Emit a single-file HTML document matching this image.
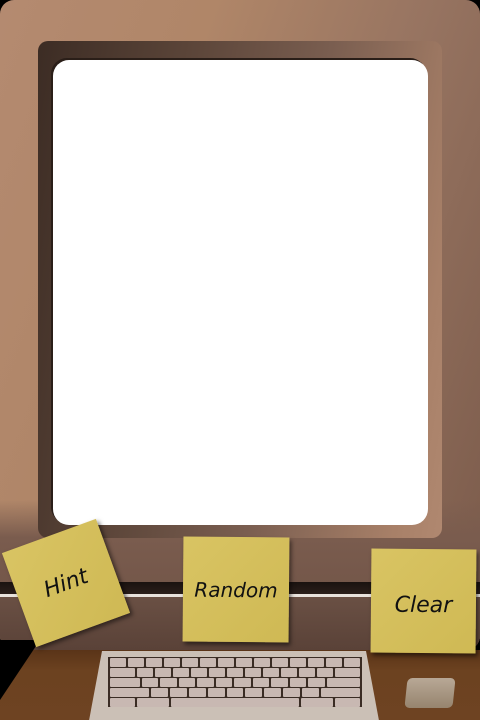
<!DOCTYPE html>
<html><head><meta charset="utf-8"><style>
html,body{margin:0;padding:0;background:#000;}
#r{position:relative;width:480px;height:720px;overflow:hidden;background:#000;}
.desk{position:absolute;left:0;top:650px;width:480px;height:70px;background:linear-gradient(#5a3418,#6c4220 30%,#6e4322);}
.deskshadow{position:absolute;left:0;top:640px;width:40px;height:60px;background:#000;clip-path:polygon(0 0,100% 0,0 100%);}
.bezel{position:absolute;left:0;top:0;width:480px;height:650px;border-radius:14px;background:linear-gradient(110deg,#b48a70 0%,#b08668 30%,#977461 60%,#7a5a4a 100%);}
.lower{position:absolute;left:0;top:500px;width:480px;height:150px;border-radius:0 0 14px 14px;background:linear-gradient(180deg,rgba(122,92,78,0) 0%,#7a5c4e 25%,#6c5044 100%);}
.band{position:absolute;left:0;top:582px;width:480px;height:12px;background:linear-gradient(#1a1210,#2a1e1a);}
.line{position:absolute;left:0;top:594px;width:480px;height:3px;background:#e8e2dc;}
.lowerb{position:absolute;left:0;top:597px;width:480px;height:53px;border-radius:0 0 14px 14px;background:linear-gradient(#6a5044,#5a4238);}
.recess{position:absolute;left:38px;top:41px;width:404px;height:497px;border-radius:10px;background:linear-gradient(100deg,#3c2c24 0%,#5a4438 30%,#7a5e50 60%,#a88068 90%,#b08870 100%);}
.screen{position:absolute;left:53px;top:60px;width:375px;height:465px;border-radius:16px;background:#fff;box-shadow:-2px -2px 0 #2a1e18;}
.note{position:absolute;background:linear-gradient(135deg,#d9c463,#cfb954);box-shadow:2px 3px 4px rgba(0,0,0,.5);font-family:"DejaVu Sans","Liberation Sans",sans-serif;font-style:italic;color:#111;display:flex;align-items:center;justify-content:center;font-size:22px;}
.kb{position:absolute;left:88px;top:651px;width:292px;height:75px;background:#cbc0b6;clip-path:polygon(14px 0,278px 0,292px 100%,0 100%);}
.keys{position:absolute;left:108px;top:657px;width:254px;height:50px;background:#3a2c24;padding:1px 2px;box-sizing:border-box;}
.row{display:flex;gap:2px;height:9px;margin-bottom:1px;}
.row span{flex:1;background:#c8b8b2;border-radius:1px;}
.mouse{position:absolute;left:406px;top:678px;width:48px;height:30px;border-radius:5px;background:linear-gradient(#b8a896,#96846e);transform:skewX(-6deg);}
</style></head><body><div id="r">
<div class="desk"></div>
<div class="bezel"></div>
<div class="lower"></div>
<div class="band"></div>
<div class="line"></div>
<div class="lowerb"></div>
<div class="recess"></div>
<div class="screen"></div>
<div class="deskshadow"></div>
<div class="kb"></div>
<div class="keys">
<div class="row"><span></span><span></span><span></span><span></span><span></span><span></span><span></span><span></span><span></span><span></span><span></span><span></span><span></span><span></span></div>
<div class="row"><span style="flex:1.6"></span><span></span><span></span><span></span><span></span><span></span><span></span><span></span><span></span><span></span><span></span><span></span><span style="flex:1.6"></span></div>
<div class="row"><span style="flex:1.8"></span><span></span><span></span><span></span><span></span><span></span><span></span><span></span><span></span><span></span><span></span><span style="flex:2"></span></div>
<div class="row"><span style="flex:2.3"></span><span></span><span></span><span></span><span></span><span></span><span></span><span></span><span></span><span></span><span style="flex:2.3"></span></div>
<div class="row"><span style="flex:1.6"></span><span style="flex:2"></span><span style="flex:8"></span><span style="flex:2"></span><span style="flex:1.6"></span></div>
</div>
<div class="mouse"></div>
<div class="note" style="left:16px;top:533px;width:100px;height:100px;transform:rotate(-20deg);">Hint</div>
<div class="note" style="left:183px;top:537px;width:106px;height:105px;transform:rotate(0.5deg);font-size:20px;">Random</div>
<div class="note" style="left:371px;top:549px;width:105px;height:104px;transform:rotate(0.5deg);padding-top:8px;box-sizing:border-box;">Clear</div>
</div></body></html>
